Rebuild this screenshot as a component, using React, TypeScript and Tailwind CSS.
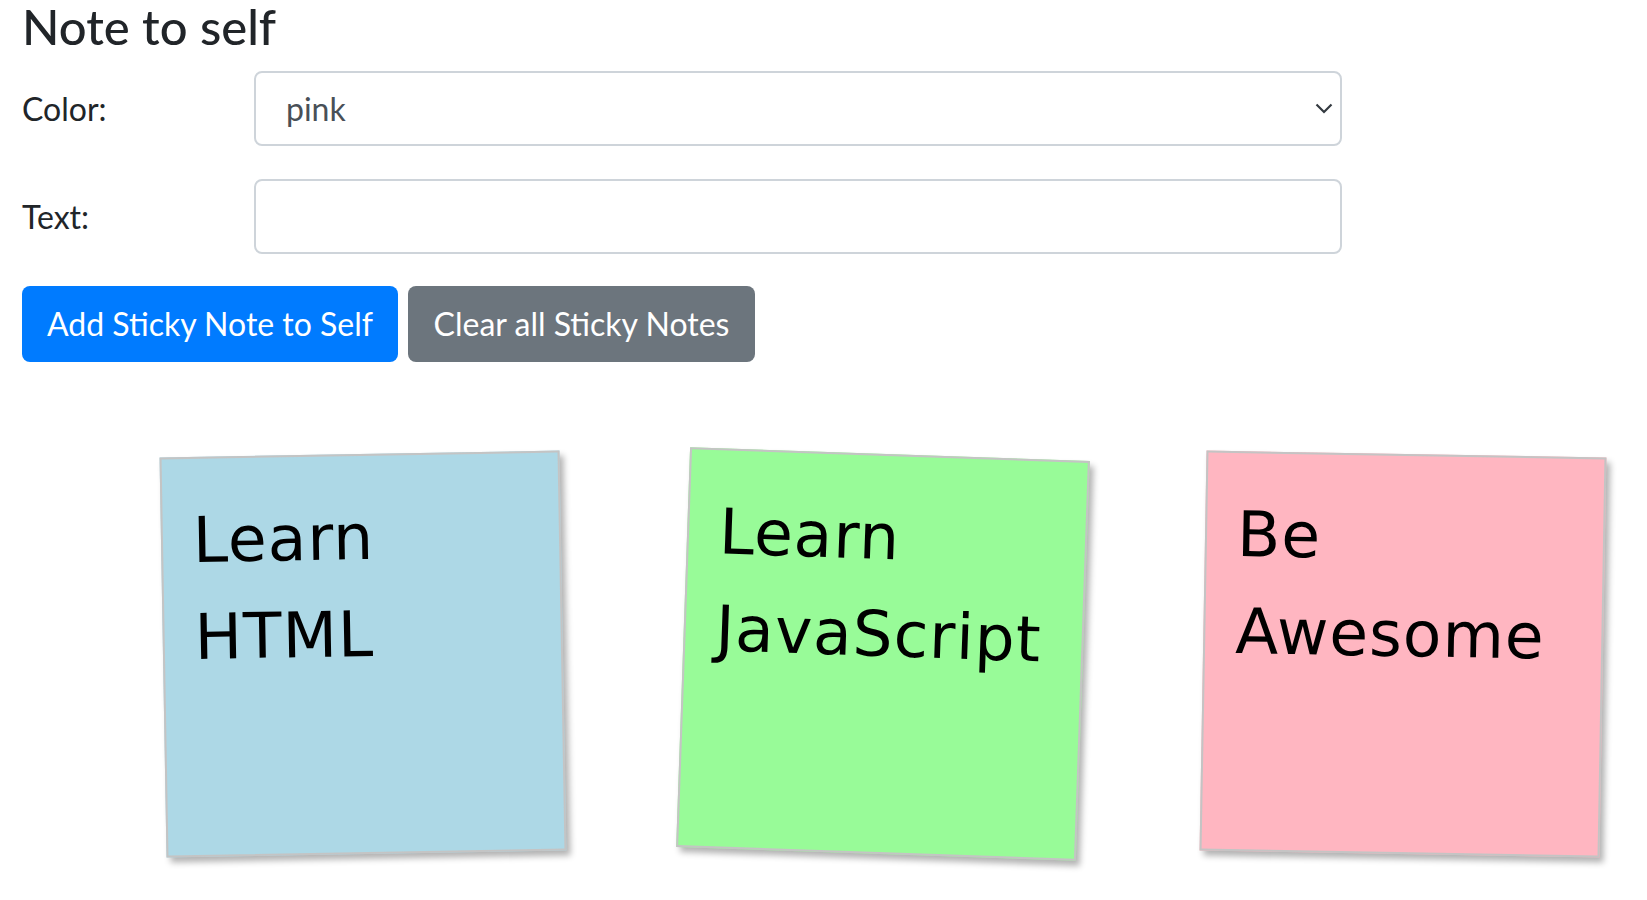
import { useState } from 'react';

interface Note {
  id: number;
  text: string[];
  color: string;
  tilt: string;
}

const notes: Note[] = [
  { id: 1, text: ['Learn', 'HTML'], color: 'bg-[#add8e6]', tilt: '-rotate-1' },
  { id: 2, text: ['Learn', 'JavaScript'], color: 'bg-[#98fb98]', tilt: 'rotate-2' },
  { id: 3, text: ['Be', 'Awesome'], color: 'bg-[#ffb6c1]', tilt: 'rotate-1' },
];

const StickyNote = ({ note }: { note: Note }) => (
  <div
    className={`h-[400px] w-[400px] shrink-0 border-2 border-[#c4c4c4] pl-[30px] pt-[33px] shadow-[4px_5px_6px_rgba(0,0,0,0.3)] ${note.color} ${note.tilt}`}
  >
    {note.text.map((line) => (
      <div
        key={line}
        className="font-['DejaVu_Sans',sans-serif] text-[63px] leading-[97px] tracking-[1px] text-black"
      >
        {line}
      </div>
    ))}
  </div>
);

export default function App() {
  const [color, setColor] = useState('pink');
  const [text, setText] = useState('');

  return (
    <div className="min-h-screen bg-white pl-[22px] font-['Lato','Liberation_Sans',sans-serif] text-[#212529]">
      <h1 className="mb-[19px] text-[49px] font-medium leading-[52px]">Note to self</h1>

      {/* form */}
      <div className="mb-[33px] flex items-center">
        <label className="w-[232px] text-[32px] leading-[48px]">Color:</label>
        <div className="relative w-[1088px]">
          <select
            value={color}
            onChange={(e) => setColor(e.target.value)}
            className="h-[75px] w-full appearance-none rounded-[8px] border-2 border-[#ced4da] bg-white pl-[30px] text-[32px] text-[#495057] outline-none"
          >
            <option value="yellow">yellow</option>
            <option value="lightblue">lightblue</option>
            <option value="palegreen">palegreen</option>
            <option value="pink">pink</option>
          </select>
          <svg
            className="pointer-events-none absolute right-[9px] top-[32px] h-[11px] w-[18px] text-[#343a40]"
            viewBox="0 0 18 11"
            fill="none"
          >
            <path d="M1.5 1.5 L9 9 L16.5 1.5" stroke="currentColor" strokeWidth="2.2" />
          </svg>
        </div>
      </div>

      <div className="mb-[32px] flex items-center">
        <label className="w-[232px] text-[32px] leading-[48px]">Text:</label>
        <input
          value={text}
          onChange={(e) => setText(e.target.value)}
          className="h-[75px] w-[1088px] rounded-[8px] border-2 border-[#ced4da] bg-white px-[30px] text-[32px] text-[#495057] outline-none"
        />
      </div>

      <div className="flex gap-[10px]">
        <button type="button" className="h-[76px] w-[376px] rounded-[8px] bg-[#007bff] text-[32px] text-white">
          Add Sticky Note to Self
        </button>
        <button type="button" className="h-[76px] w-[347px] rounded-[8px] bg-[#6c757d] text-[32px] text-white">
          Clear all Sticky Notes
        </button>
      </div>

      {/* notes board */}
      <div className="mt-[92px] flex gap-[120px] pb-[40px] pl-[141px]">
        {notes.map((n) => (
          <StickyNote key={n.id} note={n} />
        ))}
      </div>
    </div>
  );
}
